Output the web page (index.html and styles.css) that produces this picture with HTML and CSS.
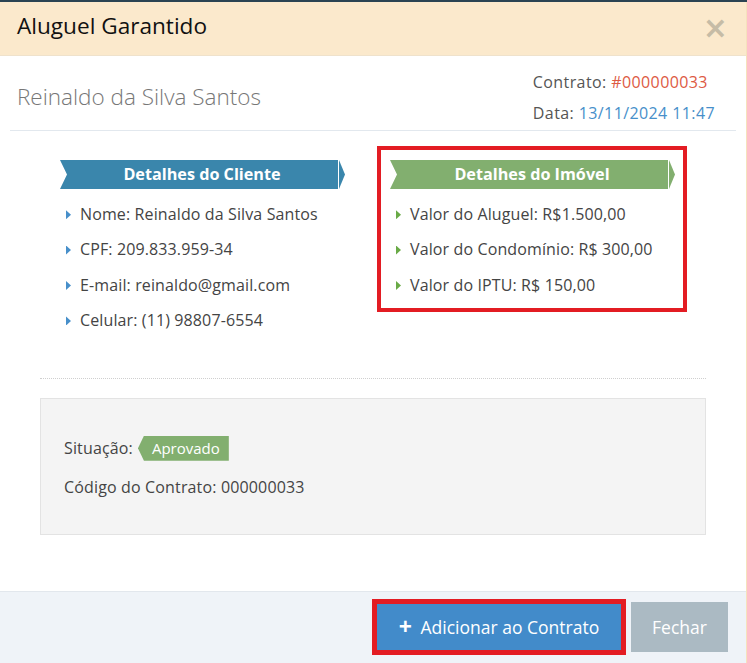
FILE: index.html
```html
<!DOCTYPE html>
<html lang="pt-BR">
<head>
<meta charset="utf-8">
<title>Aluguel Garantido</title>
<link rel="stylesheet" href="styles.css">
</head>
<body>
<div class="topbar"></div>
<div class="modal">
  <div class="modal-header">
    <h3 class="modal-title">Aluguel Garantido</h3>
    <span class="close">&times;</span>
  </div>
  <div class="modal-body">
    <div class="summary">
      <div class="client-name">Reinaldo da Silva Santos</div>
      <div class="meta">
        <div>Contrato: <span class="red">#000000033</span></div>
        <div>Data: <span class="blue">13/11/2024 11:47</span></div>
      </div>
    </div>
    <div class="columns">
      <div class="col col-client">
        <div class="ribbon ribbon-blue">Detalhes do Cliente</div>
        <ul class="details details-blue">
          <li>Nome: Reinaldo da Silva Santos</li>
          <li>CPF: 209.833.959-34</li>
          <li>E-mail: reinaldo@gmail.com</li>
          <li>Celular: (11) 98807-6554</li>
        </ul>
      </div>
      <div class="col col-property">
        <div class="ribbon ribbon-green">Detalhes do Imóvel</div>
        <ul class="details details-green">
          <li>Valor do Aluguel: R$1.500,00</li>
          <li>Valor do Condomínio: R$ 300,00</li>
          <li>Valor do IPTU: R$ 150,00</li>
        </ul>
      </div>
    </div>
    <div class="hr-dotted"></div>
    <div class="well">
      <div class="well-row">Situação: <span class="badge-arrow">Aprovado</span></div>
      <div class="well-row second">Código do Contrato: 000000033</div>
    </div>
  </div>
  <div class="modal-footer">
    <button class="btn btn-primary"><span class="plus">+</span> Adicionar ao Contrato</button>
    <button class="btn btn-grey">Fechar</button>
  </div>
</div>
</body>
</html>
```

FILE: styles.css
```css
* { box-sizing: border-box; }
html, body {
  margin: 0;
  padding: 0;
  width: 747px;
  height: 663px;
  overflow: hidden;
  background: #ffffff;
  font-family: "Open Sans", "Noto Sans", sans-serif;
  color: #444;
}
.topbar {
  height: 2px;
  background: #2a4352;
}
.modal {
  border-right: 1px solid #f6e2bc;
  height: 661px;
  display: flex;
  flex-direction: column;
}
.modal-header {
  height: 54px;
  background: #fbe9cc;
  border-bottom: 1px solid #efe2cc;
  display: flex;
  align-items: center;
  justify-content: space-between;
  padding: 0 18px 0 17px;
}
.modal-title {
  margin: 0;
  font-size: 22.6px;
  font-weight: 400;
  color: #111;
  line-height: 30px;
  position: relative;
  top: -3px;
}
.close {
  font-size: 30px;
  font-weight: 700;
  color: #c6bca6;
  line-height: 28px;
  font-family: "DejaVu Sans", sans-serif;
  position: relative;
  top: -1px;
}
.modal-body {
  flex: 1;
}
.summary {
  margin: 0 10px;
  height: 75px;
  border-bottom: 1px solid #e2e8ee;
  display: flex;
  justify-content: space-between;
}
.client-name {
  margin-top: 26px;
  padding-left: 7px;
  font-size: 22.5px;
  font-weight: 300;
  color: #777;
  line-height: 30px;
}
.meta {
  padding-top: 11px;
  padding-right: 21px;
  font-size: 16px;
  letter-spacing: 0.4px;
  line-height: 31px;
  color: #555;
}
.red { color: #dd5a43; }
.blue { color: #478fca; }
.columns {
  margin: 15px 40px 0;
  display: grid;
  grid-template-columns: 337px 310px;
  align-items: start;
}
.col { position: relative; }
.col-client {
  padding: 14px 0 0 20px;
}
.col-property {
  border: 4px solid #e31c23;
  padding: 10px 0 5px 9px;
}
.ribbon {
  width: 278px;
  height: 29px;
  line-height: 28px;
  text-align: center;
  color: #fff;
  font-size: 16.2px;
  font-weight: 700;
  clip-path: polygon(0 0, 100% 0, 100% 100%, 0 100%, 7px 50%);
  padding-left: 6px;
}
.ribbon-blue { background: #3a86ac; }
.ribbon-green { background: #82af6f; }
.col::before {
  content: "";
  position: absolute;
  width: 6px;
  height: 29px;
  clip-path: polygon(0 0, 100% 50%, 0 100%);
}
.col-client::before { left: 299px; top: 14px; background: #3a86ac; }
.col-property::before { left: 288px; top: 10px; background: #82af6f; }
.details {
  list-style: none;
  margin: 8px 0 0;
  padding: 0 0 0 6px;
}
.details li {
  line-height: 35.4px;
  font-size: 16px;
  letter-spacing: 0.12px;
  color: #444;
  display: flex;
  align-items: center;
}
.details li::before {
  content: "";
  width: 5px;
  height: 9px;
  margin-right: 9px;
  clip-path: polygon(0 0, 100% 50%, 0 100%);
  flex: none;
}
.details-blue li::before { background: #478fca; }
.details-green li::before { background: #69aa46; }
.hr-dotted {
  margin: 39px 40px 0;
  border-top: 1px dotted #cfcfcf;
  height: 0;
}
.well {
  margin: 19px 40px 0;
  height: 137px;
  background: #f4f4f4;
  border: 1px solid #e3e3e3;
  padding: 37px 23px 0;
  font-size: 16px;
  letter-spacing: 0.15px;
  color: #444;
}
.well-row {
  line-height: 25px;
  display: flex;
  align-items: center;
}
.well-row.second {
  margin-top: 14px;
}
.badge-arrow {
  margin-left: 5px;
  height: 25px;
  line-height: 25px;
  background: #82af6f;
  color: #fff;
  font-size: 15px;
  letter-spacing: 0;
  padding: 0 9px 0 14px;
  clip-path: polygon(6px 0, 100% 0, 100% 100%, 6px 100%, 0 50%);
}
.modal-footer {
  height: 72px;
  border-top: 1px solid #e2e7ed;
  background: #eff3f8;
  padding: 10px 18px 0 0;
  display: flex;
  justify-content: flex-end;
  align-items: flex-start;
  gap: 8px;
}
.btn {
  border: 0;
  height: 50px;
  font-family: "Open Sans", "Noto Sans", sans-serif;
  font-size: 17.5px;
  color: #fff;
  cursor: pointer;
  padding: 0;
}
.btn-primary {
  width: 248px;
  background: #428bca;
  outline: 5px solid #e31c23;
  outline-offset: -2px;
}
.plus {
  font-weight: 700;
  font-size: 23px;
  line-height: 17px;
  margin-right: 4px;
  position: relative;
  top: 1px;
}
.btn-grey {
  width: 97px;
  background: #abbac3;
}
```
